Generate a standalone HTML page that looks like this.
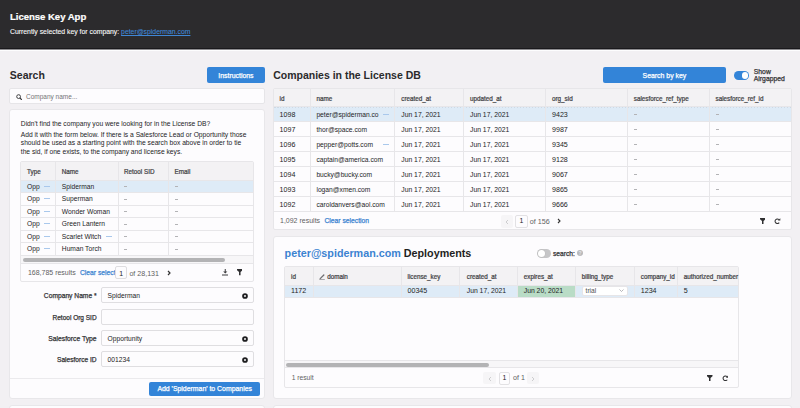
<!DOCTYPE html><html><head><meta charset="utf-8"><style>
html,body{margin:0;padding:0;width:800px;height:408px;overflow:hidden;background:#f2f0f3;font-family:"Liberation Sans",sans-serif;}
.t{position:absolute;white-space:nowrap;}
.b{position:absolute;box-sizing:border-box;}
</style></head><body>
<div class="b" style="left:0.00px;top:0.00px;width:800.00px;height:48.00px;background:#2c2b2d"></div>
<div class="b" style="left:0.00px;top:48.00px;width:800.00px;height:1.00px;background:#1a191c"></div>
<div class="b" style="left:0.00px;top:49.00px;width:800.00px;height:1.00px;background:#8e8d90"></div>
<div class="b" style="left:0.00px;top:50.00px;width:800.00px;height:1.00px;background:#fdfdfe"></div>
<div class="t " style="left:10.00px;top:12.24px;font-size:9.6px;line-height:9.6px;font-weight:700;color:#ffffff;letter-spacing:-0.05px;-webkit-text-stroke:0.2px #fff">License Key App</div>
<div class="t " style="left:10.00px;top:29.08px;font-size:6.85px;line-height:6.85px;font-weight:400;color:#fafafa;-webkit-text-stroke:0.1px #fafafa">Currently selected key for company: <span style="color:#3f87d6;-webkit-text-stroke:0.1px #3f87d6;text-decoration:underline;text-decoration-color:#3f87d6">peter@spiderman.com</span></div>
<div class="t " style="left:9.80px;top:70.28px;font-size:10.5px;line-height:10.5px;font-weight:700;color:#2a2a2c;">Search</div>
<div class="b" style="left:207.00px;top:67.00px;width:58.00px;height:16.00px;background:#3384d8;border-radius:2px"></div>
<div class="t " style="left:35.95px;width:400px;top:72.94px;font-size:6.9px;line-height:6.9px;font-weight:400;color:#ffffff;text-align:center;-webkit-text-stroke:0.25px #ffffff">Instructions</div>
<div class="b" style="left:9.00px;top:88.00px;width:256.00px;height:16.00px;background:#fdfcfe;border:1px solid #e6e5e8;border-radius:2px"></div>
<svg class="b" style="left:15.8px;top:93.6px" width="6.5" height="6.5" viewBox="0 0 6.5 6.5"><circle cx="2.6" cy="2.6" r="1.9" fill="none" stroke="#3a3a3c" stroke-width="0.95"/><line x1="4" y1="4" x2="5.9" y2="5.9" stroke="#3a3a3c" stroke-width="1.2"/></svg>
<div class="t " style="left:26.00px;top:93.97px;font-size:6.5px;line-height:6.5px;font-weight:400;color:#747477;">Company name...</div>
<div class="b" style="left:9.00px;top:109.00px;width:256.00px;height:290.00px;background:#fdfcfe;border:1px solid #e8e7ea;border-radius:3px"></div>
<div class="t " style="left:20.80px;top:121.10px;font-size:6.7px;line-height:6.7px;font-weight:400;color:#232325;">Didn't find the company you were looking for in the License DB?</div>
<div class="t " style="left:20.80px;top:131.81px;font-size:6.7px;line-height:6.7px;font-weight:400;color:#232325;">Add it with the form below. If there is a Salesforce Lead or Opportunity those</div>
<div class="t " style="left:20.80px;top:139.61px;font-size:6.7px;line-height:6.7px;font-weight:400;color:#232325;">should be used as a starting point with the search box above in order to tie</div>
<div class="t " style="left:20.80px;top:149.21px;font-size:6.7px;line-height:6.7px;font-weight:400;color:#232325;">the sid, if one exists, to the company and license keys.</div>
<div class="b" style="left:20.00px;top:161.00px;width:234.00px;height:121.00px;background:#fdfcfe;border:1px solid #e7e6e9;border-radius:2px"></div>
<div class="b" style="left:21.00px;top:162.00px;width:232.00px;height:18.00px;background:#f3f2f4"></div>
<div class="b" style="left:21.00px;top:180.00px;width:232.00px;height:12.00px;background:#deebf7"></div>
<div class="b" style="left:21.00px;top:180.00px;width:232.00px;height:1.00px;background:#e7e6e9"></div>
<div class="b" style="left:21.00px;top:192.00px;width:232.00px;height:1.00px;background:#e7e6e9"></div>
<div class="b" style="left:21.00px;top:205.00px;width:232.00px;height:1.00px;background:#e7e6e9"></div>
<div class="b" style="left:21.00px;top:217.00px;width:232.00px;height:1.00px;background:#e7e6e9"></div>
<div class="b" style="left:21.00px;top:230.00px;width:232.00px;height:1.00px;background:#e7e6e9"></div>
<div class="b" style="left:21.00px;top:242.00px;width:232.00px;height:1.00px;background:#e7e6e9"></div>
<div class="b" style="left:21.00px;top:255.00px;width:232.00px;height:1.00px;background:#e7e6e9"></div>
<div class="b" style="left:55.00px;top:162.00px;width:1.00px;height:93.00px;background:#e7e6e9"></div>
<div class="b" style="left:118.00px;top:162.00px;width:1.00px;height:93.00px;background:#e7e6e9"></div>
<div class="b" style="left:168.00px;top:162.00px;width:1.00px;height:93.00px;background:#e7e6e9"></div>
<div class="t " style="left:27.00px;top:168.84px;font-size:6.3px;line-height:6.3px;font-weight:400;color:#424245;-webkit-text-stroke:0.22px #424245">Type</div>
<div class="t " style="left:61.80px;top:168.84px;font-size:6.3px;line-height:6.3px;font-weight:400;color:#424245;-webkit-text-stroke:0.22px #424245">Name</div>
<div class="t " style="left:124.00px;top:168.84px;font-size:6.3px;line-height:6.3px;font-weight:400;color:#424245;-webkit-text-stroke:0.22px #424245">Retool SID</div>
<div class="t " style="left:174.60px;top:168.84px;font-size:6.3px;line-height:6.3px;font-weight:400;color:#424245;-webkit-text-stroke:0.22px #424245">Email</div>
<div class="t " style="left:27.00px;top:183.91px;font-size:6.7px;line-height:6.7px;font-weight:400;color:#232325;">Opp</div>
<div class="b" style="left:44.20px;top:185.70px;width:5.80px;height:0.80px;background:#a9c8ec"></div>
<div class="t " style="left:61.80px;top:183.91px;font-size:6.7px;line-height:6.7px;font-weight:400;color:#232325;">Spiderman</div>
<div class="b" style="left:124.00px;top:186.10px;width:3.20px;height:0.80px;background:#b3b3b6"></div>
<div class="b" style="left:174.60px;top:186.10px;width:3.20px;height:0.80px;background:#b3b3b6"></div>
<div class="t " style="left:27.00px;top:196.41px;font-size:6.7px;line-height:6.7px;font-weight:400;color:#232325;">Opp</div>
<div class="b" style="left:44.20px;top:198.20px;width:5.80px;height:0.80px;background:#a9c8ec"></div>
<div class="t " style="left:61.80px;top:196.41px;font-size:6.7px;line-height:6.7px;font-weight:400;color:#232325;">Superman</div>
<div class="b" style="left:124.00px;top:198.60px;width:3.20px;height:0.80px;background:#b3b3b6"></div>
<div class="b" style="left:174.60px;top:198.60px;width:3.20px;height:0.80px;background:#b3b3b6"></div>
<div class="t " style="left:27.00px;top:208.91px;font-size:6.7px;line-height:6.7px;font-weight:400;color:#232325;">Opp</div>
<div class="b" style="left:44.20px;top:210.70px;width:5.80px;height:0.80px;background:#a9c8ec"></div>
<div class="t " style="left:61.80px;top:208.91px;font-size:6.7px;line-height:6.7px;font-weight:400;color:#232325;">Wonder Woman</div>
<div class="b" style="left:124.00px;top:211.10px;width:3.20px;height:0.80px;background:#b3b3b6"></div>
<div class="b" style="left:174.60px;top:211.10px;width:3.20px;height:0.80px;background:#b3b3b6"></div>
<div class="t " style="left:27.00px;top:221.41px;font-size:6.7px;line-height:6.7px;font-weight:400;color:#232325;">Opp</div>
<div class="b" style="left:44.20px;top:223.20px;width:5.80px;height:0.80px;background:#a9c8ec"></div>
<div class="t " style="left:61.80px;top:221.41px;font-size:6.7px;line-height:6.7px;font-weight:400;color:#232325;">Green Lantern</div>
<div class="b" style="left:124.00px;top:223.60px;width:3.20px;height:0.80px;background:#b3b3b6"></div>
<div class="b" style="left:174.60px;top:223.60px;width:3.20px;height:0.80px;background:#b3b3b6"></div>
<div class="t " style="left:27.00px;top:233.91px;font-size:6.7px;line-height:6.7px;font-weight:400;color:#232325;">Opp</div>
<div class="b" style="left:44.20px;top:235.70px;width:5.80px;height:0.80px;background:#a9c8ec"></div>
<div class="t " style="left:61.80px;top:233.91px;font-size:6.7px;line-height:6.7px;font-weight:400;color:#232325;">Scarlet Witch</div>
<div class="b" style="left:106.00px;top:235.70px;width:6.00px;height:0.80px;background:#a9c8ec"></div>
<div class="b" style="left:124.00px;top:236.10px;width:3.20px;height:0.80px;background:#b3b3b6"></div>
<div class="b" style="left:174.60px;top:236.10px;width:3.20px;height:0.80px;background:#b3b3b6"></div>
<div class="t " style="left:27.00px;top:246.41px;font-size:6.7px;line-height:6.7px;font-weight:400;color:#232325;">Opp</div>
<div class="b" style="left:44.20px;top:248.20px;width:5.80px;height:0.80px;background:#a9c8ec"></div>
<div class="t " style="left:61.80px;top:246.41px;font-size:6.7px;line-height:6.7px;font-weight:400;color:#232325;">Human Torch</div>
<div class="b" style="left:124.00px;top:248.60px;width:3.20px;height:0.80px;background:#b3b3b6"></div>
<div class="b" style="left:174.60px;top:248.60px;width:3.20px;height:0.80px;background:#b3b3b6"></div>
<div class="b" style="left:21.00px;top:256.00px;width:232.00px;height:7.00px;background:#f7f6f8"></div>
<div class="b" style="left:22.50px;top:257.50px;width:202.50px;height:4.20px;background:#b3b3b5;border-radius:2px"></div>
<div class="b" style="left:21.00px;top:263.00px;width:232.00px;height:1.00px;background:#e7e6e9"></div>
<div class="t " style="left:27.90px;top:269.05px;font-size:7px;line-height:7px;font-weight:400;color:#5f5f62;">168,785 results</div>
<div class="t " style="left:79.90px;top:269.86px;font-size:6.75px;line-height:6.75px;font-weight:400;color:#3b83d1;-webkit-text-stroke:0.25px #3b83d1">Clear select</div>
<div class="b" style="left:115.00px;top:266.40px;width:12.40px;height:13.00px;background:#fdfcfe;border:1px solid #dedde0;border-radius:2px"></div>
<div class="t " style="left:-78.80px;width:400px;top:270.83px;font-size:6.9px;line-height:6.9px;font-weight:400;color:#232325;text-align:center;">1</div>
<div class="t " style="left:129.40px;top:270.56px;font-size:7.1px;line-height:7.1px;font-weight:400;color:#5f5f62;">of 28,131</div>
<svg class="b" style="left:166.5px;top:270px" width="4" height="6" viewBox="0 0 4 6"><path d="M1 1 L3 3 L1 5" fill="none" stroke="#333" stroke-width="1.2"/></svg>
<svg class="b" style="left:221.5px;top:269.3px" width="6.5" height="6.5" viewBox="0 0 13 13"><rect x="5.5" y="0" width="2" height="6" fill="#3a3a3c"/><path d="M2.3 5 H10.7 L6.5 9.2 Z" fill="#3a3a3c"/><rect x="0" y="11" width="13" height="2" fill="#3a3a3c"/></svg>
<svg class="b" style="left:236.5px;top:269.3px" width="5.6" height="6.3" viewBox="0 0 11 12.5"><path d="M0 0 H11 V2.6 L7 6 V12.5 H4 V6 L0 2.6 Z" fill="#2f2f31"/></svg>
<div class="t " style="right:703.40px;top:293.11px;font-size:6.7px;line-height:6.7px;font-weight:400;color:#333335;text-align:right;-webkit-text-stroke:0.25px #333335">Company Name *</div>
<div class="b" style="left:101.00px;top:287.00px;width:153.00px;height:16.00px;background:#fdfcfe;border:1px solid #dfdee1;border-radius:2px"></div>
<div class="t " style="left:107.60px;top:292.70px;font-size:6.7px;line-height:6.7px;font-weight:400;color:#232325;">Spiderman</div>
<svg class="b" style="left:241.9px;top:292.60px" width="6" height="6" viewBox="0 0 6 6"><circle cx="3" cy="3" r="2.85" fill="#1e1e20"/><circle cx="3" cy="3" r="1.05" fill="#e8e8ea"/></svg>
<div class="t " style="right:703.40px;top:315.28px;font-size:6.5px;line-height:6.5px;font-weight:400;color:#333335;text-align:right;-webkit-text-stroke:0.25px #333335">Retool Org SID</div>
<div class="b" style="left:101.00px;top:309.00px;width:153.00px;height:16.00px;background:#fdfcfe;border:1px solid #dfdee1;border-radius:2px"></div>
<div class="t " style="right:703.40px;top:336.06px;font-size:6.75px;line-height:6.75px;font-weight:400;color:#333335;text-align:right;-webkit-text-stroke:0.25px #333335">Salesforce Type</div>
<div class="b" style="left:101.00px;top:330.00px;width:153.00px;height:16.00px;background:#fdfcfe;border:1px solid #dfdee1;border-radius:2px"></div>
<div class="t " style="left:107.60px;top:335.70px;font-size:6.7px;line-height:6.7px;font-weight:400;color:#232325;">Opportunity</div>
<svg class="b" style="left:241.9px;top:335.60px" width="6" height="6" viewBox="0 0 6 6"><circle cx="3" cy="3" r="2.85" fill="#1e1e20"/><circle cx="3" cy="3" r="1.05" fill="#e8e8ea"/></svg>
<div class="t " style="right:703.40px;top:357.19px;font-size:6.6px;line-height:6.6px;font-weight:400;color:#333335;text-align:right;-webkit-text-stroke:0.25px #333335">Salesforce ID</div>
<div class="b" style="left:101.00px;top:351.00px;width:153.00px;height:16.00px;background:#fdfcfe;border:1px solid #dfdee1;border-radius:2px"></div>
<div class="t " style="left:107.60px;top:356.70px;font-size:6.7px;line-height:6.7px;font-weight:400;color:#232325;">001234</div>
<svg class="b" style="left:241.9px;top:356.60px" width="6" height="6" viewBox="0 0 6 6"><circle cx="3" cy="3" r="2.85" fill="#1e1e20"/><circle cx="3" cy="3" r="1.05" fill="#e8e8ea"/></svg>
<div class="b" style="left:10.00px;top:378.00px;width:254.00px;height:1.00px;background:#ebeaed"></div>
<div class="b" style="left:149.00px;top:382.00px;width:111.00px;height:14.00px;background:#3384d8;border-radius:2px"></div>
<div class="t " style="left:4.70px;width:400px;top:386.33px;font-size:6.9px;line-height:6.9px;font-weight:400;color:#ffffff;text-align:center;-webkit-text-stroke:0.25px #ffffff">Add 'Spiderman' to Companies</div>
<div class="b" style="left:9.00px;top:405.00px;width:256.00px;height:15.00px;background:#fdfcfe;border:1px solid #e8e7ea;border-radius:3px"></div>
<div class="t " style="left:273.20px;top:69.88px;font-size:10.5px;line-height:10.5px;font-weight:700;color:#2a2a2c;">Companies in the License DB</div>
<div class="b" style="left:603.00px;top:67.00px;width:123.00px;height:16.00px;background:#3384d8;border-radius:2px"></div>
<div class="t " style="left:464.40px;width:400px;top:72.94px;font-size:6.9px;line-height:6.9px;font-weight:400;color:#ffffff;text-align:center;-webkit-text-stroke:0.25px #ffffff">Search by key</div>
<div class="b" style="left:734.30px;top:71.20px;width:15.10px;height:8.80px;background:#3384d8;border-radius:5px"></div>
<div class="b" style="left:741.6px;top:72.3px;width:6.7px;height:6.7px;border-radius:50%;background:#fff"></div>
<div class="t " style="left:753.80px;top:68.52px;font-size:6.8px;line-height:6.8px;font-weight:400;color:#333335;-webkit-text-stroke:0.25px #333335">Show</div>
<div class="t " style="left:753.80px;top:75.62px;font-size:6.8px;line-height:6.8px;font-weight:400;color:#333335;-webkit-text-stroke:0.25px #333335">Airgapped</div>
<div class="b" style="left:273.00px;top:88.00px;width:519.00px;height:142.00px;background:#fdfcfe;border:1px solid #e7e6e9;border-radius:2px"></div>
<div class="b" style="left:274.00px;top:89.00px;width:517.00px;height:17.00px;background:#f3f2f4"></div>
<div class="b" style="left:274.00px;top:106.00px;width:517.00px;height:15.00px;background:#deebf7"></div>
<div class="b" style="left:274.00px;top:107.00px;width:517.00px;height:1.00px;background:repeating-linear-gradient(90deg,#cfd9e4 0 1.5px,transparent 1.5px 3px)"></div>
<div class="b" style="left:274.00px;top:106.00px;width:517.00px;height:1.00px;background:#e7e6e9"></div>
<div class="b" style="left:274.00px;top:121.00px;width:517.00px;height:1.00px;background:#e7e6e9"></div>
<div class="b" style="left:274.00px;top:136.00px;width:517.00px;height:1.00px;background:#e7e6e9"></div>
<div class="b" style="left:274.00px;top:151.00px;width:517.00px;height:1.00px;background:#e7e6e9"></div>
<div class="b" style="left:274.00px;top:166.00px;width:517.00px;height:1.00px;background:#e7e6e9"></div>
<div class="b" style="left:274.00px;top:181.00px;width:517.00px;height:1.00px;background:#e7e6e9"></div>
<div class="b" style="left:274.00px;top:196.00px;width:517.00px;height:1.00px;background:#e7e6e9"></div>
<div class="b" style="left:274.00px;top:211.00px;width:517.00px;height:1.00px;background:#e7e6e9"></div>
<div class="b" style="left:310.00px;top:89.00px;width:1.00px;height:122.00px;background:#e7e6e9"></div>
<div class="b" style="left:394.00px;top:89.00px;width:1.00px;height:122.00px;background:#e7e6e9"></div>
<div class="b" style="left:463.00px;top:89.00px;width:1.00px;height:122.00px;background:#e7e6e9"></div>
<div class="b" style="left:545.00px;top:89.00px;width:1.00px;height:122.00px;background:#e7e6e9"></div>
<div class="b" style="left:627.00px;top:89.00px;width:1.00px;height:122.00px;background:#e7e6e9"></div>
<div class="b" style="left:709.00px;top:89.00px;width:1.00px;height:122.00px;background:#e7e6e9"></div>
<div class="t " style="left:279.60px;top:95.84px;font-size:6.3px;line-height:6.3px;font-weight:400;color:#424245;-webkit-text-stroke:0.22px #424245">id</div>
<div class="t " style="left:316.40px;top:95.84px;font-size:6.3px;line-height:6.3px;font-weight:400;color:#424245;-webkit-text-stroke:0.22px #424245">name</div>
<div class="t " style="left:401.25px;top:95.84px;font-size:6.3px;line-height:6.3px;font-weight:400;color:#424245;-webkit-text-stroke:0.22px #424245">created_at</div>
<div class="t " style="left:470.00px;top:95.84px;font-size:6.3px;line-height:6.3px;font-weight:400;color:#424245;-webkit-text-stroke:0.22px #424245">updated_at</div>
<div class="t " style="left:552.00px;top:95.84px;font-size:6.3px;line-height:6.3px;font-weight:400;color:#424245;-webkit-text-stroke:0.22px #424245">org_sid</div>
<div class="t " style="left:633.80px;top:95.84px;font-size:6.3px;line-height:6.3px;font-weight:400;color:#424245;-webkit-text-stroke:0.22px #424245">salesforce_ref_type</div>
<div class="t " style="left:715.50px;top:95.84px;font-size:6.3px;line-height:6.3px;font-weight:400;color:#424245;-webkit-text-stroke:0.22px #424245">salesforce_ref_id</div>
<div class="t " style="left:279.60px;top:111.56px;font-size:7.1px;line-height:7.1px;font-weight:400;color:#232325;">1098</div>
<div class="t " style="left:316.40px;top:111.91px;font-size:6.7px;line-height:6.7px;font-weight:400;color:#232325;">peter@spiderman.co</div>
<div class="b" style="left:383.00px;top:113.70px;width:6.00px;height:0.80px;background:#a9c8ec"></div>
<div class="t " style="left:401.25px;top:111.82px;font-size:6.8px;line-height:6.8px;font-weight:400;color:#232325;">Jun 17, 2021</div>
<div class="t " style="left:470.00px;top:111.82px;font-size:6.8px;line-height:6.8px;font-weight:400;color:#232325;">Jun 17, 2021</div>
<div class="t " style="left:552.00px;top:111.56px;font-size:7.1px;line-height:7.1px;font-weight:400;color:#232325;">9423</div>
<div class="b" style="left:633.80px;top:113.60px;width:3.20px;height:0.80px;background:#b3b3b6"></div>
<div class="b" style="left:715.50px;top:113.60px;width:3.20px;height:0.80px;background:#b3b3b6"></div>
<div class="t " style="left:279.60px;top:126.56px;font-size:7.1px;line-height:7.1px;font-weight:400;color:#232325;">1097</div>
<div class="t " style="left:316.40px;top:126.91px;font-size:6.7px;line-height:6.7px;font-weight:400;color:#232325;">thor@space.com</div>
<div class="t " style="left:401.25px;top:126.82px;font-size:6.8px;line-height:6.8px;font-weight:400;color:#232325;">Jun 17, 2021</div>
<div class="t " style="left:470.00px;top:126.82px;font-size:6.8px;line-height:6.8px;font-weight:400;color:#232325;">Jun 17, 2021</div>
<div class="t " style="left:552.00px;top:126.56px;font-size:7.1px;line-height:7.1px;font-weight:400;color:#232325;">9987</div>
<div class="b" style="left:633.80px;top:128.60px;width:3.20px;height:0.80px;background:#b3b3b6"></div>
<div class="b" style="left:715.50px;top:128.60px;width:3.20px;height:0.80px;background:#b3b3b6"></div>
<div class="t " style="left:279.60px;top:141.56px;font-size:7.1px;line-height:7.1px;font-weight:400;color:#232325;">1096</div>
<div class="t " style="left:316.40px;top:141.91px;font-size:6.7px;line-height:6.7px;font-weight:400;color:#232325;">pepper@potts.com</div>
<div class="b" style="left:383.00px;top:143.70px;width:6.00px;height:0.80px;background:#a9c8ec"></div>
<div class="t " style="left:401.25px;top:141.82px;font-size:6.8px;line-height:6.8px;font-weight:400;color:#232325;">Jun 17, 2021</div>
<div class="t " style="left:470.00px;top:141.82px;font-size:6.8px;line-height:6.8px;font-weight:400;color:#232325;">Jun 17, 2021</div>
<div class="t " style="left:552.00px;top:141.56px;font-size:7.1px;line-height:7.1px;font-weight:400;color:#232325;">9345</div>
<div class="b" style="left:633.80px;top:143.60px;width:3.20px;height:0.80px;background:#b3b3b6"></div>
<div class="b" style="left:715.50px;top:143.60px;width:3.20px;height:0.80px;background:#b3b3b6"></div>
<div class="t " style="left:279.60px;top:156.56px;font-size:7.1px;line-height:7.1px;font-weight:400;color:#232325;">1095</div>
<div class="t " style="left:316.40px;top:156.91px;font-size:6.7px;line-height:6.7px;font-weight:400;color:#232325;">captain@america.com</div>
<div class="t " style="left:401.25px;top:156.82px;font-size:6.8px;line-height:6.8px;font-weight:400;color:#232325;">Jun 17, 2021</div>
<div class="t " style="left:470.00px;top:156.82px;font-size:6.8px;line-height:6.8px;font-weight:400;color:#232325;">Jun 17, 2021</div>
<div class="t " style="left:552.00px;top:156.56px;font-size:7.1px;line-height:7.1px;font-weight:400;color:#232325;">9128</div>
<div class="b" style="left:633.80px;top:158.60px;width:3.20px;height:0.80px;background:#b3b3b6"></div>
<div class="b" style="left:715.50px;top:158.60px;width:3.20px;height:0.80px;background:#b3b3b6"></div>
<div class="t " style="left:279.60px;top:171.56px;font-size:7.1px;line-height:7.1px;font-weight:400;color:#232325;">1094</div>
<div class="t " style="left:316.40px;top:171.91px;font-size:6.7px;line-height:6.7px;font-weight:400;color:#232325;">bucky@bucky.com</div>
<div class="t " style="left:401.25px;top:171.82px;font-size:6.8px;line-height:6.8px;font-weight:400;color:#232325;">Jun 17, 2021</div>
<div class="t " style="left:470.00px;top:171.82px;font-size:6.8px;line-height:6.8px;font-weight:400;color:#232325;">Jun 17, 2021</div>
<div class="t " style="left:552.00px;top:171.56px;font-size:7.1px;line-height:7.1px;font-weight:400;color:#232325;">9067</div>
<div class="b" style="left:633.80px;top:173.60px;width:3.20px;height:0.80px;background:#b3b3b6"></div>
<div class="b" style="left:715.50px;top:173.60px;width:3.20px;height:0.80px;background:#b3b3b6"></div>
<div class="t " style="left:279.60px;top:186.56px;font-size:7.1px;line-height:7.1px;font-weight:400;color:#232325;">1093</div>
<div class="t " style="left:316.40px;top:186.91px;font-size:6.7px;line-height:6.7px;font-weight:400;color:#232325;">logan@xmen.com</div>
<div class="t " style="left:401.25px;top:186.82px;font-size:6.8px;line-height:6.8px;font-weight:400;color:#232325;">Jun 17, 2021</div>
<div class="t " style="left:470.00px;top:186.82px;font-size:6.8px;line-height:6.8px;font-weight:400;color:#232325;">Jun 17, 2021</div>
<div class="t " style="left:552.00px;top:186.56px;font-size:7.1px;line-height:7.1px;font-weight:400;color:#232325;">9865</div>
<div class="b" style="left:633.80px;top:188.60px;width:3.20px;height:0.80px;background:#b3b3b6"></div>
<div class="b" style="left:715.50px;top:188.60px;width:3.20px;height:0.80px;background:#b3b3b6"></div>
<div class="t " style="left:279.60px;top:201.56px;font-size:7.1px;line-height:7.1px;font-weight:400;color:#232325;">1092</div>
<div class="t " style="left:316.40px;top:201.91px;font-size:6.7px;line-height:6.7px;font-weight:400;color:#232325;">caroldanvers@aol.com</div>
<div class="t " style="left:401.25px;top:201.82px;font-size:6.8px;line-height:6.8px;font-weight:400;color:#232325;">Jun 17, 2021</div>
<div class="t " style="left:470.00px;top:201.82px;font-size:6.8px;line-height:6.8px;font-weight:400;color:#232325;">Jun 17, 2021</div>
<div class="t " style="left:552.00px;top:201.56px;font-size:7.1px;line-height:7.1px;font-weight:400;color:#232325;">9666</div>
<div class="b" style="left:633.80px;top:203.60px;width:3.20px;height:0.80px;background:#b3b3b6"></div>
<div class="b" style="left:715.50px;top:203.60px;width:3.20px;height:0.80px;background:#b3b3b6"></div>
<div class="t " style="left:280.00px;top:217.25px;font-size:7px;line-height:7px;font-weight:400;color:#5f5f62;">1,092 results</div>
<div class="t " style="left:324.40px;top:218.26px;font-size:6.75px;line-height:6.75px;font-weight:400;color:#3b83d1;-webkit-text-stroke:0.25px #3b83d1">Clear selection</div>
<div class="b" style="left:501.00px;top:214.75px;width:11.75px;height:12.75px;background:#f6f5f7;border-radius:2px"></div>
<svg class="b" style="left:505px;top:218.5px" width="4" height="6" viewBox="0 0 4 6"><path d="M3 1 L1 3 L3 5" fill="none" stroke="#c8c8ca" stroke-width="0.9"/></svg>
<div class="b" style="left:515.25px;top:214.60px;width:12.25px;height:13.00px;background:#fdfcfe;border:1px solid #e2e1e4;border-radius:2px"></div>
<div class="t " style="left:321.40px;width:400px;top:218.33px;font-size:6.9px;line-height:6.9px;font-weight:400;color:#232325;text-align:center;">1</div>
<div class="t " style="left:529.75px;top:218.48px;font-size:7.2px;line-height:7.2px;font-weight:400;color:#5f5f62;">of 156</div>
<svg class="b" style="left:557px;top:218px" width="4" height="6" viewBox="0 0 4 6"><path d="M1 1 L3 3 L1 5" fill="none" stroke="#333" stroke-width="1.1"/></svg>
<svg class="b" style="left:759.8px;top:217.5px" width="5.5" height="6.25" viewBox="0 0 11 12.5"><path d="M0 0 H11 V2.6 L7 6 V12.5 H4 V6 L0 2.6 Z" fill="#2f2f31"/></svg>
<svg class="b" style="left:774.2px;top:217.6px" width="6.5" height="6.5" viewBox="0 0 13 13"><path d="M9.9 3.1 A4.6 4.6 0 1 0 10.4 9.3" fill="none" stroke="#2f2f31" stroke-width="2.1"/><path d="M7.8 5.2 H12.6 V0.4 Z" fill="#2f2f31"/></svg>
<div class="b" style="left:273.00px;top:236.00px;width:519.00px;height:163.00px;background:#fdfcfe;border:1px solid #e8e7ea;border-radius:3px"></div>
<div class="t " style="left:284.60px;top:248.16px;font-size:10.75px;line-height:10.75px;font-weight:700;color:#1f1f21;"><span style="color:#3b83d1">peter@spiderman.com</span> Deployments</div>
<div class="b" style="left:537.00px;top:249.30px;width:14.40px;height:8.60px;background:#c6c6c8;border-radius:5px"></div>
<div class="b" style="left:537.6px;top:249.9px;width:7.4px;height:7.4px;border-radius:50%;background:#fff;box-shadow:0 0 0 0.4px #bbb"></div>
<div class="t " style="left:553.00px;top:250.81px;font-size:6.7px;line-height:6.7px;font-weight:400;color:#333335;-webkit-text-stroke:0.25px #333335">search:</div>
<div class="b" style="left:577px;top:250.4px;width:6px;height:6px;border-radius:50%;background:#b9b9bc"></div>
<div class="t " style="left:380.00px;width:400px;top:251.35px;font-size:5px;line-height:5px;font-weight:700;color:#e6e6e8;text-align:center;">?</div>
<div class="b" style="left:284.00px;top:266.00px;width:455.00px;height:122.00px;background:#fdfcfe;border:1px solid #e7e6e9;border-radius:2px"></div>
<div class="b" style="left:285.00px;top:267.00px;width:453.00px;height:18.00px;background:#f3f2f4"></div>
<div class="b" style="left:285.00px;top:285.00px;width:453.00px;height:12.00px;background:#deebf7"></div>
<div class="b" style="left:517.00px;top:285.00px;width:58.00px;height:12.00px;background:#b9dcc6"></div>
<div class="b" style="left:285.00px;top:285.00px;width:453.00px;height:1.00px;background:#e7e6e9"></div>
<div class="b" style="left:285.00px;top:297.00px;width:453.00px;height:1.00px;background:#e7e6e9"></div>
<div class="b" style="left:313.00px;top:267.00px;width:1.00px;height:30.00px;background:#e7e6e9"></div>
<div class="b" style="left:401.00px;top:267.00px;width:1.00px;height:30.00px;background:#e7e6e9"></div>
<div class="b" style="left:459.00px;top:267.00px;width:1.00px;height:30.00px;background:#e7e6e9"></div>
<div class="b" style="left:517.00px;top:267.00px;width:1.00px;height:30.00px;background:#e7e6e9"></div>
<div class="b" style="left:575.00px;top:267.00px;width:1.00px;height:30.00px;background:#e7e6e9"></div>
<div class="b" style="left:634.00px;top:267.00px;width:1.00px;height:30.00px;background:#e7e6e9"></div>
<div class="b" style="left:677.00px;top:267.00px;width:1.00px;height:30.00px;background:#e7e6e9"></div>
<div class="t " style="left:291.00px;top:274.34px;font-size:6.3px;line-height:6.3px;font-weight:400;color:#424245;-webkit-text-stroke:0.22px #424245">id</div>
<div class="t " style="left:327.20px;top:274.34px;font-size:6.3px;line-height:6.3px;font-weight:400;color:#424245;-webkit-text-stroke:0.22px #424245">domain</div>
<div class="t " style="left:407.50px;top:274.34px;font-size:6.3px;line-height:6.3px;font-weight:400;color:#424245;-webkit-text-stroke:0.22px #424245">license_key</div>
<div class="t " style="left:466.75px;top:274.34px;font-size:6.3px;line-height:6.3px;font-weight:400;color:#424245;-webkit-text-stroke:0.22px #424245">created_at</div>
<div class="t " style="left:523.75px;top:274.34px;font-size:6.3px;line-height:6.3px;font-weight:400;color:#424245;-webkit-text-stroke:0.22px #424245">expires_at</div>
<div class="t " style="left:581.75px;top:274.34px;font-size:6.3px;line-height:6.3px;font-weight:400;color:#424245;-webkit-text-stroke:0.22px #424245">billing_type</div>
<div class="t " style="left:640.75px;top:274.34px;font-size:6.3px;line-height:6.3px;font-weight:400;color:#424245;-webkit-text-stroke:0.22px #424245">company_id</div>
<div class="t " style="left:683.75px;top:274.34px;font-size:6.3px;line-height:6.3px;font-weight:400;color:#424245;-webkit-text-stroke:0.22px #424245">authorized_number</div>
<svg class="b" style="left:319px;top:274px" width="6" height="6" viewBox="0 0 6 6"><path d="M1.2 4.6 L4.8 1" fill="none" stroke="#6f6f72" stroke-width="1.3" stroke-linecap="round"/><path d="M0.3 5.5 H5.8" stroke="#8a8a8d" stroke-width="0.7"/></svg>
<div class="t " style="left:291.00px;top:288.16px;font-size:7.1px;line-height:7.1px;font-weight:400;color:#232325;">1172</div>
<div class="t " style="left:407.50px;top:288.16px;font-size:7.1px;line-height:7.1px;font-weight:400;color:#232325;">00345</div>
<div class="t " style="left:466.75px;top:288.42px;font-size:6.8px;line-height:6.8px;font-weight:400;color:#232325;">Jun 17, 2021</div>
<div class="t " style="left:523.75px;top:288.42px;font-size:6.8px;line-height:6.8px;font-weight:400;color:#232325;">Jun 20, 2021</div>
<div class="b" style="left:581.50px;top:286.30px;width:46.50px;height:10.10px;background:#ffffff;border:1px solid #e6e5e8;border-radius:2px"></div>
<div class="t " style="left:585.60px;top:288.19px;font-size:6.6px;line-height:6.6px;font-weight:400;color:#505053;">trial</div>
<svg class="b" style="left:618.9px;top:289.4px" width="5" height="3" viewBox="0 0 5 3"><path d="M0.5 0.5 L2.5 2.5 L4.5 0.5" fill="none" stroke="#9a9a9d" stroke-width="0.7"/></svg>
<div class="t " style="left:640.75px;top:288.16px;font-size:7.1px;line-height:7.1px;font-weight:400;color:#232325;">1234</div>
<div class="t " style="left:683.75px;top:288.16px;font-size:7.1px;line-height:7.1px;font-weight:400;color:#232325;">5</div>
<div class="b" style="left:285.00px;top:361.00px;width:453.00px;height:6.00px;background:#f7f6f8"></div>
<div class="b" style="left:285.00px;top:360.00px;width:453.00px;height:1.00px;background:#e7e6e9"></div>
<div class="b" style="left:286.00px;top:362.80px;width:203.40px;height:4.00px;background:#b3b3b5;border-radius:2px"></div>
<div class="b" style="left:285.00px;top:367.00px;width:453.00px;height:1.00px;background:#e7e6e9"></div>
<div class="t " style="left:291.75px;top:374.61px;font-size:6.7px;line-height:6.7px;font-weight:400;color:#5f5f62;">1 result</div>
<div class="b" style="left:483.00px;top:371.90px;width:13.00px;height:12.50px;background:#f6f5f7;border-radius:2px"></div>
<svg class="b" style="left:487.5px;top:375.8px" width="4" height="6" viewBox="0 0 4 6"><path d="M3 1 L1 3 L3 5" fill="none" stroke="#c8c8ca" stroke-width="0.9"/></svg>
<div class="b" style="left:498.50px;top:371.60px;width:11.90px;height:13.00px;background:#fdfcfe;border:1px solid #e2e1e4;border-radius:2px"></div>
<div class="t " style="left:304.45px;width:400px;top:375.44px;font-size:6.9px;line-height:6.9px;font-weight:400;color:#232325;text-align:center;">1</div>
<div class="t " style="left:513.00px;top:374.96px;font-size:7.1px;line-height:7.1px;font-weight:400;color:#5f5f62;">of 1</div>
<div class="b" style="left:526.50px;top:371.90px;width:12.90px;height:12.50px;background:#f6f5f7;border-radius:2px"></div>
<svg class="b" style="left:531px;top:375.8px" width="4" height="6" viewBox="0 0 4 6"><path d="M1 1 L3 3 L1 5" fill="none" stroke="#c8c8ca" stroke-width="0.9"/></svg>
<svg class="b" style="left:707.3px;top:374.8px" width="5.5" height="6.25" viewBox="0 0 11 12.5"><path d="M0 0 H11 V2.6 L7 6 V12.5 H4 V6 L0 2.6 Z" fill="#2f2f31"/></svg>
<svg class="b" style="left:721.6px;top:374.6px" width="6.6" height="6.6" viewBox="0 0 13 13"><path d="M9.9 3.1 A4.6 4.6 0 1 0 10.4 9.3" fill="none" stroke="#2f2f31" stroke-width="2.1"/><path d="M7.8 5.2 H12.6 V0.4 Z" fill="#2f2f31"/></svg>
<div class="b" style="left:273.00px;top:405.00px;width:519.00px;height:15.00px;background:#fdfcfe;border:1px solid #e8e7ea;border-radius:3px"></div>
</body></html>
